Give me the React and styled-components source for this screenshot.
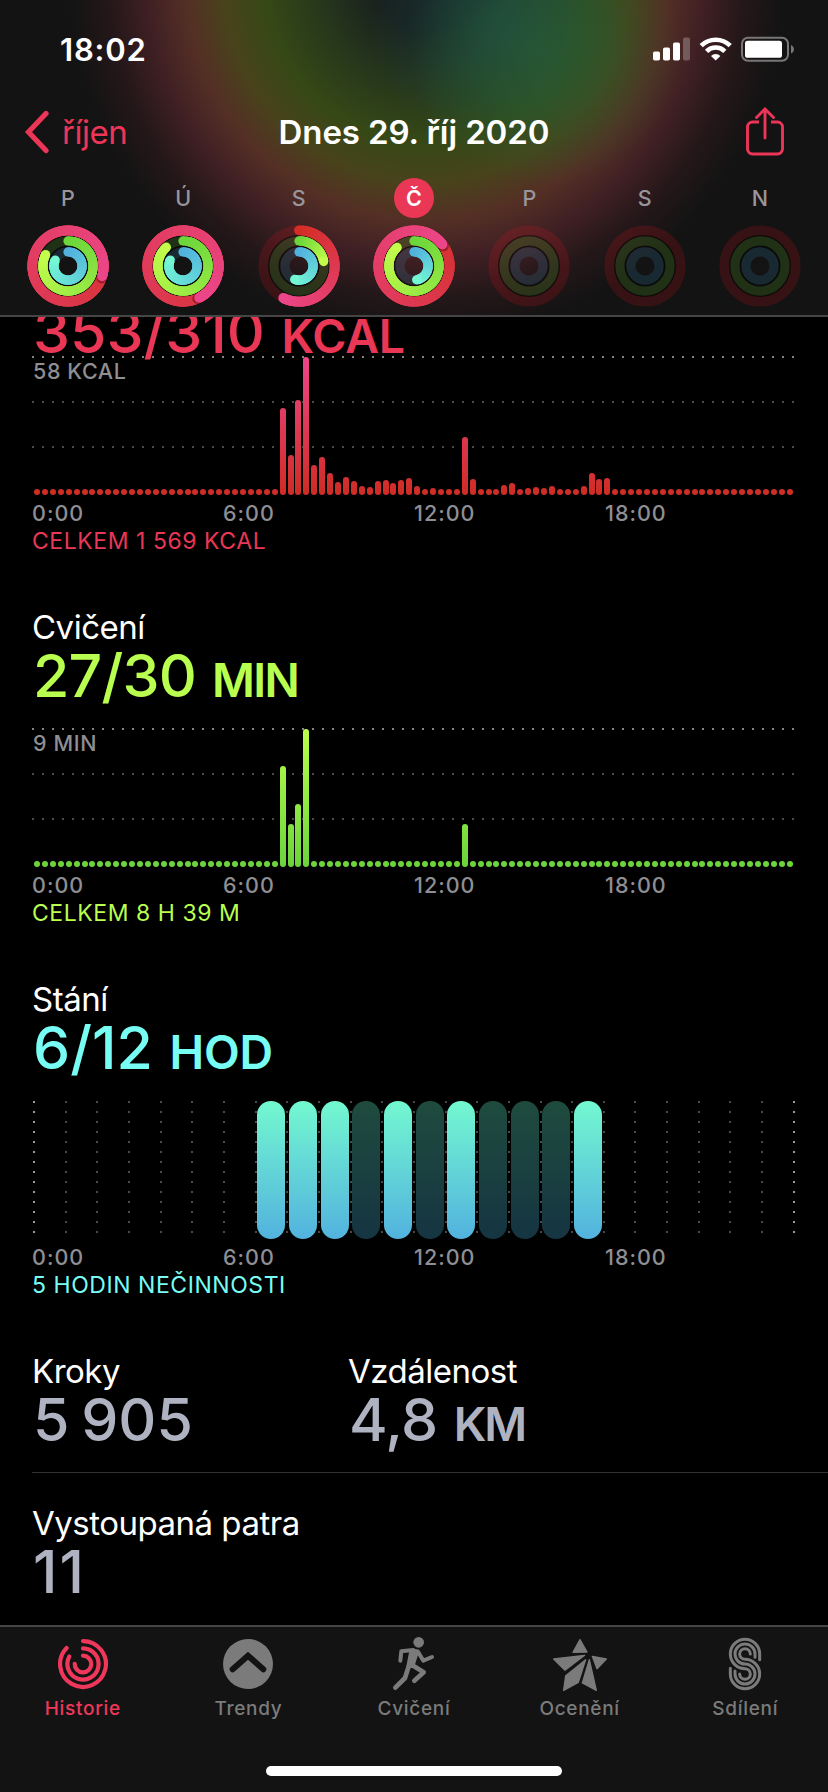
import React from "react";
import styled, { createGlobalStyle } from "styled-components";

const week = [
  { day: "P", rings: [1.297, 0.825, 0.82] },
  { day: "Ú", rings: [1.425, 0.885, 0.82] },
  { day: "S", rings: [0.573, 0.222, 0.55] },
  { day: "Č", rings: [1.147, 0.883, 0.47], today: true },
  { day: "P", rings: [0, 0, 0] },
  { day: "S", rings: [0, 0, 0] },
  { day: "N", rings: [0, 0, 0] },
];

// one value per quarter of an hour, anything missing is an empty slot
const moveData = {
  31: 87, 32: 40, 33: 95, 34: 138, 35: 30, 36: 38, 37: 22, 38: 13, 39: 18,
  40: 14, 41: 9, 42: 8, 43: 14, 44: 15, 45: 12, 46: 15, 47: 17, 48: 9, 50: 7,
  54: 58, 55: 16, 59: 10, 60: 12, 62: 7, 63: 8, 64: 7, 65: 9, 69: 9, 70: 22,
  71: 16, 72: 17,
};
const exerciseData = { 31: 101, 32: 43, 33: 63, 34: 138, 54: 43 };
const standData = {
  7: "on", 8: "on", 9: "on", 10: "off", 11: "on", 12: "off", 13: "on",
  14: "off", 15: "off", 16: "off", 17: "on",
};

const ringTypes = [
  { r: 35.7, w: 9.8, from: [211, 46, 38], to: [236, 70, 138], track: "rgba(250, 17, 34, 0.16)" },
  { r: 25.1, w: 9.2, from: [108, 214, 60], to: [196, 253, 76], track: "rgba(100, 200, 40, 0.17)" },
  { r: 14.1, w: 9.2, from: [82, 178, 222], to: [116, 248, 212], track: "rgba(60, 160, 210, 0.16)" },
];

const point = (r, turn) => {
  const a = turn * 2 * Math.PI;
  return [r * Math.sin(a), -r * Math.cos(a)];
};

const arc = (r, start, end) => {
  const [x1, y1] = point(r, start);
  const [x2, y2] = point(r, end);
  const large = end - start > 0.5 ? 1 : 0;
  return `M${x1} ${y1}A${r} ${r} 0 ${large} 1 ${x2} ${y2}`;
};

const mix = (from, to, t) =>
  `rgb(${from.map((c, i) => Math.round(c + (to[i] - c) * t)).join(",")})`;

const Ring = ({ type, value }) => {
  const { r, w, from, to, track } = type;
  const count = 48;
  const step = value / count;
  const [sx, sy] = point(r, 0);
  const [ex, ey] = point(r, value);
  const [shx, shy] = point(r, value + 0.008);
  return (
    <g fill="none">
      <circle r={r} stroke={track} strokeWidth={w} />
      {value > 0 && value < 1 && (
        <circle cx={sx} cy={sy} r={w / 2} fill={mix(from, to, 0)} />
      )}
      {value > 0 &&
        Array.from({ length: count }, (_, i) => (
          <React.Fragment key={i}>
            {value > 1 && i === count - 4 && (
              <circle cx={shx} cy={shy} r={w / 2 + 0.4} fill="rgba(90, 0, 10, 0.45)" />
            )}
            <path
              d={arc(r, i * step, Math.min((i + 3) * step, value))}
              stroke={mix(from, to, i / count)}
              strokeWidth={w}
            />
          </React.Fragment>
        ))}
      {value > 0 && <circle cx={ex} cy={ey} r={w / 2} fill={mix(from, to, 1)} />}
    </g>
  );
};

const Rings = ({ values }) => (
  <svg width="84" height="84" viewBox="-42 -42 84 84">
    <circle r="30.3" fill="none" stroke="rgba(0, 0, 0, 0.45)" strokeWidth="1.6" />
    <circle r="19.6" fill="none" stroke="rgba(0, 0, 0, 0.45)" strokeWidth="1.8" />
    {ringTypes.map((type, i) => (
      <Ring key={i} type={type} value={values[i]} />
    ))}
  </svg>
);

const StatusIcons = () => (
  <svg width="142" height="26" viewBox="0 0 142 26">
    <g fill="#fff">
      <rect x="0" y="15.5" width="7" height="9" rx="1.8" />
      <rect x="10" y="11.5" width="7" height="13" rx="1.8" />
      <rect x="20" y="6.5" width="7" height="18" rx="1.8" />
      <rect x="30" y="1.5" width="7" height="23" rx="1.8" opacity="0.25" />
      <path d="M62.7 24.6l-4.7-4.6a6.8 6.8 0 0 1 9.4 0z" />
      <rect x="92" y="4.8" width="37" height="17" rx="2.6" />
    </g>
    <g fill="none" stroke="#fff" strokeWidth="4.6">
      <path d="M48.2 9.7a20.6 20.6 0 0 1 29 0" />
      <path d="M53.6 15.3a12.9 12.9 0 0 1 18.2 0" />
    </g>
    <rect x="89" y="1.8" width="46" height="23" rx="6" fill="none" stroke="#777" strokeWidth="2" />
    <path d="M138 9v8.6c1.8-.7 2.9-2.3 2.9-4.3S139.8 9.700 138 9z" fill="#777" />
  </svg>
);

const BackIcon = () => (
  <svg width="26" height="44" viewBox="0 0 26 44" fill="none" stroke="#ed3558" strokeWidth="5.2" strokeLinecap="round">
    <path d="M22 3.5L4.5 22L22 40.5" />
  </svg>
);

const ShareIcon = () => (
  <svg width="38" height="49" viewBox="0 0 38 49" fill="none" stroke="#ed3558" strokeWidth="2.9" strokeLinecap="butt">
    <path d="M13 15H6.5a5 5 0 0 0-5 5V42a5 5 0 0 0 5 5H31.500a5 5 0 0 0 5-5V20a5 5 0 0 0-5-5H25" />
    <path d="M19 31V2.5M10.5 10.5L19 2L27.500 10.5" strokeLinecap="round" />
  </svg>
);

const HistoryIcon = () => (
  <svg width="54" height="54" viewBox="-27 -27 54 54" fill="none" stroke="#ef375b" strokeWidth="4.2" strokeLinecap="round">
    <path d={arc(22.9, 0, 0.873)} />
    <path d={arc(15.6, 0, 0.83)} />
    <path d={arc(8.3, 0, 0.755)} />
  </svg>
);

const TrendsIcon = () => (
  <svg width="54" height="54" viewBox="-27 -27 54 54">
    <circle r="25" fill="#7b7b7b" />
    <path d="M-15.3 5.2L0 -8.3L15.3 5.2" fill="none" stroke="#131313" strokeWidth="6" strokeLinecap="round" />
  </svg>
);

const WorkoutIcon = () => (
  <svg width="54" height="54" viewBox="21 36 162 162" fill="none" stroke="#7b7b7b" strokeWidth="14" strokeLinecap="round" strokeLinejoin="round">
    <circle cx="116" cy="52" r="16" fill="#7b7b7b" stroke="none" />
    <path d="M61 107L64 79L100 75" strokeWidth="12" />
    <path d="M114 80L130 107L156 96" strokeWidth="12" />
    <path d="M95 78L110 80L97 121L86 124Z" fill="#7b7b7b" />
    <path d="M96 120L131 142L103 167" />
    <path d="M86 124L75 159L46 188" />
  </svg>
);

const AwardsIcon = () => (
  <svg width="54" height="54" viewBox="414 81 162 162" fill="#7b7b7b" stroke="#7b7b7b" strokeWidth="4" strokeLinejoin="round">
    <path d="M495 89L516 126L474 127Z" />
    <path d="M416 147L509 136L450 181Z" />
    <path d="M532 139L574 147L546 176Z" />
    <path d="M452 197L512 149L490 217L446 241Z" />
    <path d="M523 149L544 241L502 219Z" />
  </svg>
);

const SharingIcon = () => (
  <svg width="54" height="54" viewBox="909 81 162 162" fill="none" stroke="#7b7b7b" strokeWidth="9" strokeLinecap="round">
    <path d="M1034 149V132A44 44 0 1 0 990 176A16 16 0 1 1 974 192" />
    <path d="M1020 142V132A30 30 0 1 0 990 162A30 30 0 1 1 960 192V183" />
    <path d="M1006 132A16 16 0 1 0 990 148A44 44 0 1 1 946 192V175" />
  </svg>
);

const tabs = [
  { label: "Historie", icon: HistoryIcon, active: true },
  { label: "Trendy", icon: TrendsIcon },
  { label: "Cvičení", icon: WorkoutIcon },
  { label: "Ocenění", icon: AwardsIcon },
  { label: "Sdílení", icon: SharingIcon },
];

const TimeAxis = () => (
  <Axis>
    <span>0:00</span>
    <span>6:00</span>
    <span>12:00</span>
    <span>18:00</span>
  </Axis>
);

const BarChart = ({ data, label, top, bottom }) => (
  <Chart>
    <Scale>{label}</Scale>
    <Bars>
      {Array.from({ length: 96 }, (_, i) => (
        <Bar key={i} $top={top} $bottom={bottom} style={{ height: data[i] || 6 }} />
      ))}
    </Bars>
  </Chart>
);

const StandChart = () => (
  <Hours>
    {Array.from({ length: 25 }, (_, i) => (
      <Hour key={i} $edge={i === 0 || i === 24}>
        {standData[i] && <HourBar $on={standData[i] === "on"} />}
      </Hour>
    ))}
  </Hours>
);

const App = () => {
  return (
    <Screen>
      <GlobalStyle />
      <Header>
        <StatusBar>
          <Time>18:02</Time>
          <StatusIcons />
        </StatusBar>
        <NavBar>
          <Back>
            <BackIcon />
            <span>říjen</span>
          </Back>
          <Title>Dnes 29. říj 2020</Title>
          <Share>
            <ShareIcon />
          </Share>
        </NavBar>
        <Week>
          {week.map((item, i) => (
            <Day key={i}>
              <DayName $today={item.today}>{item.day}</DayName>
              <Rings values={item.rings} />
            </Day>
          ))}
        </Week>
      </Header>

      <Content>
        <Section $color="#ea3755">
          <Value $scrolled>
            353/310 <Unit>KCAL</Unit>
          </Value>
          <BarChart data={moveData} label="58 KCAL" top="#ec468a" bottom="#cf2c24" />
          <TimeAxis />
          <Total>CELKEM 1 569 KCAL</Total>
        </Section>
        <Section $color="#b9ff4f">
          <Label>Cvičení</Label>
          <Value $tracking="-0.8px">
            27/30 <Unit $tracking="-1.6px">MIN</Unit>
          </Value>
          <BarChart data={exerciseData} label="9 MIN" top="#bcfd4e" bottom="#6ad43b" />
          <TimeAxis />
          <Total>CELKEM 8 H 39 M</Total>
        </Section>
        <Section $color="#78fdf4">
          <Label>Stání</Label>
          <Value>
            6/12 <Unit>HOD</Unit>
          </Value>
          <StandChart />
          <TimeAxis />
          <Total>5 HODIN NEČINNOSTI</Total>
        </Section>
        <Stats>
          <Stat>
            <Label>Kroky</Label>
            <Value>5 905</Value>
          </Stat>
          <Stat>
            <Label>Vzdálenost</Label>
            <Value $tracking="-0.6px">
              4,8 <Unit $tracking="-2px">KM</Unit>
            </Value>
          </Stat>
        </Stats>
        <Stats $divided>
          <Stat>
            <Label>Vystoupaná patra</Label>
            <Value $tracking="2px">11</Value>
          </Stat>
        </Stats>
      </Content>

      <TabBar>
        <Tabs>
          {tabs.map(({ label, icon: Icon, active }) => (
            <Tab key={label} $active={active}>
              <Icon />
              <span>{label}</span>
            </Tab>
          ))}
        </Tabs>
        <HomeIndicator />
      </TabBar>
    </Screen>
  );
};

const GlobalStyle = createGlobalStyle`
  * {
    box-sizing: border-box;
  }
  body {
    margin: 0;
    background: #000;
    font-family: Inter, "Liberation Sans", sans-serif;
    -webkit-font-smoothing: antialiased;
  }
  svg {
    display: block;
    flex-shrink: 0;
  }
`;
const Screen = styled.div`
  display: flex;
  flex-direction: column;
  width: 828px;
  height: 1792px;
  overflow: hidden;
  background: #000;
  color: #fff;
`;
const Header = styled.header`
  flex: none;
  height: 317px;
  border-bottom: 2px solid #454545;
  background:
    radial-gradient(circle at 500px 20px, rgba(28, 84, 82, 0.5), rgba(28, 84, 82, 0.3) 60px, rgba(28, 84, 82, 0) 130px),
    radial-gradient(circle at 545px 50px, rgba(42, 94, 42, 0.75), rgba(42, 94, 42, 0.5) 60px, rgba(42, 94, 42, 0) 135px),
    radial-gradient(
      circle at 426px -20px,
      #171d1e 0,
      #18201e 50px,
      #26361c 105px,
      #354816 160px,
      #48431b 202px,
      #542f25 240px,
      #402024 278px,
      #241719 318px,
      #131313 358px
    );
`;
const StatusBar = styled.div`
  display: flex;
  justify-content: space-between;
  height: 100px;
  padding: 36px 33px 0 60px;
`;
const Time = styled.span`
  font-size: 31px;
  line-height: 28px;
  font-weight: 600;
  letter-spacing: 0.8px;
`;
const NavBar = styled.div`
  display: grid;
  grid-template-columns: 1fr auto 1fr;
  height: 76px;
  padding: 0 44px;
`;
const Back = styled.div`
  display: flex;
  gap: 12px;
  margin-left: -20px;
  padding-top: 10px;
  color: #ed3558;
  font-size: 33px;
  line-height: 44px;
  letter-spacing: -0.5px;
`;
const Title = styled.h1`
  margin: 0;
  padding-top: 10px;
  font-size: 33px;
  line-height: 44px;
  font-weight: 600;
  letter-spacing: -0.1px;
`;
const Share = styled.div`
  display: flex;
  justify-content: flex-end;
  padding-top: 7px;
`;
const Week = styled.div`
  display: flex;
  justify-content: space-between;
  padding: 2px 26px 0;
`;
const Day = styled.div`
  display: flex;
  flex-direction: column;
  align-items: center;
  gap: 6px;
`;
const DayName = styled.div`
  width: 40px;
  height: 40px;
  border-radius: 50%;
  background: ${(props) => (props.$today ? "#ea3756" : "none")};
  color: ${(props) => (props.$today ? "#fff" : "#99959a")};
  font-size: 21.5px;
  line-height: 40px;
  font-weight: ${(props) => (props.$today ? 600 : 500)};
  text-align: center;
`;
const Content = styled.main`
  flex: 1;
  min-height: 0;
  overflow: hidden;
`;
const Section = styled.section`
  margin-bottom: 52px;
  padding: 0 32px;
  color: ${(props) => props.$color};
`;
const Label = styled.h2`
  margin: 0;
  color: #fff;
  font-size: 33px;
  line-height: 40px;
  font-weight: 400;
  letter-spacing: -0.5px;
`;
const Value = styled.div`
  margin-top: ${(props) => (props.$scrolled ? "-14px" : 0)};
  margin-bottom: ${(props) => (props.$scrolled ? "-5px" : "23px")};
  height: 58px;
  padding-left: 1px;
  font-size: 59px;
  line-height: 58px;
  font-weight: 500;
  letter-spacing: ${(props) => props.$tracking || 0};
  word-spacing: -4px;
  white-space: nowrap;
`;
const Unit = styled.span`
  margin-left: 5px;
  font-size: 46.5px;
  font-weight: 600;
  letter-spacing: ${(props) => props.$tracking || "-0.2px"};
`;
const dots = (color) => `linear-gradient(90deg, ${color} 2px, transparent 2px)`;
const Chart = styled.div`
  display: flex;
  flex-direction: column;
  justify-content: space-between;
  height: 139px;
  background-image: ${dots("#858585")}, ${dots("#4a4a4a")}, ${dots("#4a4a4a")};
  background-size: 10px 2px;
  background-repeat: repeat-x;
  background-position: 0 0, 0 45px, 0 90px;
`;
const Scale = styled.span`
  height: 0;
  padding: 1px 0 0 1px;
  color: #8e8e93;
  font-size: 21.5px;
  line-height: 28px;
  font-weight: 500;
  letter-spacing: 0.6px;
`;
const Bars = styled.div`
  display: flex;
  align-items: flex-end;
  justify-content: space-between;
  width: 762px;
  height: 138px;
  padding-left: 2px;
`;
const Bar = styled.i`
  width: 6px;
  border-radius: 3px;
  background: linear-gradient(
      ${(props) => props.$top},
      ${(props) => props.$bottom}
    )
    bottom / 100% 138px no-repeat;
`;
const Hours = styled.div`
  display: grid;
  grid-template-columns: repeat(24, 31.667px) 2px;
  height: 139px;
  padding-left: 1px;
`;
const Hour = styled.div`
  padding: 1px 0 0 2.7px;
  background: linear-gradient(
      ${(props) => (props.$edge ? "#9a9a9a" : "#4a4a4a")} 2px,
      transparent 2px
    )
    0 1px / 2px 10px repeat-y;
`;
const HourBar = styled.div`
  width: 28px;
  height: 138px;
  border-radius: 14px;
  background: ${(props) =>
    props.$on
      ? "linear-gradient(#73f8d0, #52b2de)"
      : "linear-gradient(#1f4b3e, #153542)"};
`;
const Axis = styled.div`
  display: grid;
  grid-template-columns: repeat(4, 191px);
  margin-top: 4px;
  color: #8e8e93;
  font-size: 21.5px;
  line-height: 28px;
  font-weight: 500;
  letter-spacing: 1px;
`;
const Total = styled.div`
  font-size: 23px;
  line-height: 28px;
  letter-spacing: 0.55px;
`;
const Stats = styled.div`
  display: flex;
  margin-left: 32px;
  padding-top: ${(props) => (props.$divided ? "30px" : 0)};
  border-top: ${(props) => (props.$divided ? "1px solid #333" : "none")};
  color: #afb3c1;
`;
const Stat = styled.div`
  width: 316px;
  white-space: nowrap;
`;
const TabBar = styled.footer`
  display: flex;
  flex: none;
  flex-direction: column;
  align-items: center;
  justify-content: space-between;
  height: 167px;
  padding-bottom: 16px;
  border-top: 2px solid #454545;
  background: #131313;
`;
const Tabs = styled.nav`
  display: grid;
  grid-template-columns: repeat(5, 1fr);
  width: 100%;
  padding-top: 10px;
`;
const Tab = styled.div`
  display: flex;
  flex-direction: column;
  align-items: center;
  color: ${(props) => (props.$active ? "#ef375b" : "#7b7b7b")};
  font-size: 19px;
  line-height: 36px;
  font-weight: 500;
  letter-spacing: 0.7px;
`;
const HomeIndicator = styled.div`
  width: 296px;
  height: 10px;
  border-radius: 5px;
  background: #fff;
`;

export default App;
